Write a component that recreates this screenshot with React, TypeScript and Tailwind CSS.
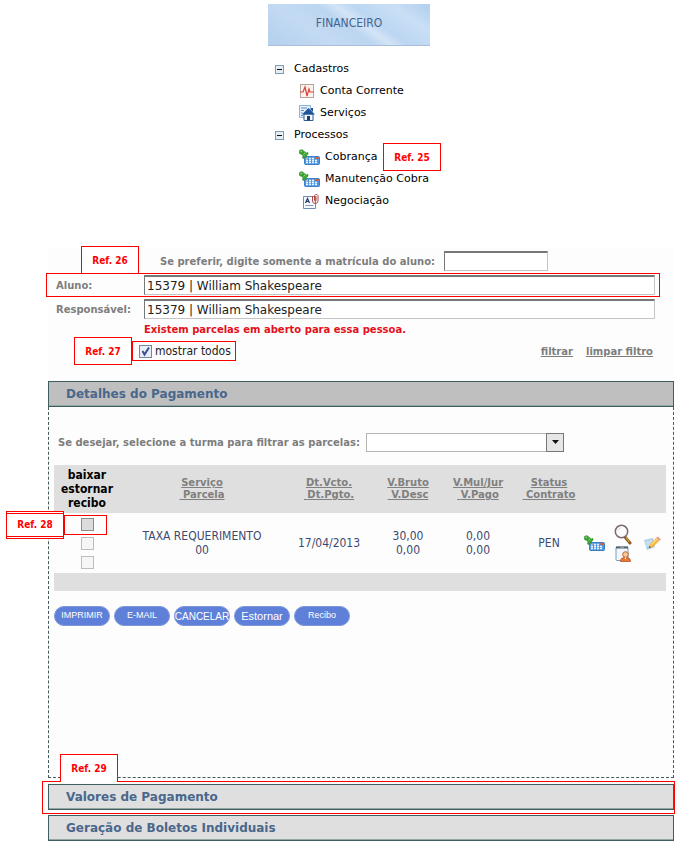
import type { ReactNode } from 'react'

const COLUMNS = [
  { top: 'Serviço', bottom: 'Parcela' },
  { top: 'Dt.Vcto.', bottom: 'Dt.Pgto.' },
  { top: 'V.Bruto', bottom: 'V.Desc' },
  { top: 'V.Mul/Jur', bottom: 'V.Pago' },
  { top: 'Status', bottom: 'Contrato' },
]

const ACTIONS = [
  { label: 'IMPRIMIR', size: 'text-[9px]' },
  { label: 'E-MAIL', size: 'text-[9px]' },
  { label: 'CANCELAR', size: 'text-[10px]' },
  { label: 'Estornar', size: 'text-[11px]' },
  { label: 'Recibo', size: 'text-[9px]' },
]

function MinusIcon() {
  return (
    <svg width="9" height="9" viewBox="0 0 9 9">
      <rect x=".5" y=".5" width="8" height="8" fill="#e6eef5" stroke="#7f9db5" />
      <path d="M2 4.5h5" stroke="#111" />
    </svg>
  )
}

function PulseIcon() {
  return (
    <svg width="14" height="14" viewBox="0 0 14 14">
      <rect x=".5" y=".5" width="13" height="13" fill="#fbf3ef" stroke="#b9a49c" />
      <path d="M0 8h3l2-5 2 9 2-7 1 3h4" fill="none" stroke="#dd4238" strokeWidth="1.2" />
    </svg>
  )
}

function HouseIcon() {
  return (
    <svg width="16" height="16" viewBox="0 0 16 16">
      <path d="M.5 .5h11v12H.5z" fill="#e4eff9" stroke="#8fb2d6" />
      <path d="M2 3h6M2 5.500h3M2 8h2M2 10.500h2" stroke="#5c93cf" />
      <path d="M5 15.500V9h9v6.500z" fill="#f4f8fc" stroke="#315f96" />
      <path d="M3 9.500 9.500 3l6.500 6.500z" fill="#1f5599" />
      <path d="M12 3h2v4l-2-2z" fill="#1f5599" />
      <path d="M8 11h3v4.500H8z" fill="#193c6b" />
    </svg>
  )
}

function PinKeyboardIcon() {
  return (
    <svg width="21" height="17" viewBox="0 0 21 17">
      <rect x="5.500" y="7.500" width="15" height="8" rx="1" fill="#4f97e0" stroke="#3b7fc6" />
      <path d="M7 9.500h8M7 11.500h12M7 13.500h12" stroke="#eaf5ff" strokeWidth="1.300" strokeDasharray="2 1" />
      <path d="M16.500 9h3" stroke="#e8572c" strokeWidth="2" />
      <path d="m5.500 7 3.500 3.500" stroke="#707070" />
      <circle cx="2.500" cy="3" r="2.300" fill="#3faa35" stroke="#23801f" strokeWidth=".6" />
      <path d="m3 5 2.500-2.500 2 1.500 1.500-.5L9 5 5 9.500l-1.500-.5.500-2z" fill="#3faa35" stroke="#23801f" strokeWidth=".6" />
      <path d="m1.500 2.500 1.500-.5M4.500 5l1.500-1" stroke="#9be27f" />
    </svg>
  )
}

function ContractIcon() {
  return (
    <svg width="17" height="17" viewBox="0 0 17 17">
      <path d="M.5 3.500h12v12H.5z" fill="#f6f9fd" stroke="#6f8db4" />
      <path d="M2.500 10 4.500 5.500 6.500 10M3.500 8.500h2" fill="none" stroke="#1f3d70" strokeWidth="1.200" />
      <path d="M2.500 12.500h8" stroke="#7f9bc0" />
      <path d="M9.500 3v5a2.500 2.500 0 0 0 5.500-.5V2.500a2 2 0 0 0-3.500 0V7.500a.8.8 0 0 0 1.500 0V3" fill="none" stroke="#b04848" />
    </svg>
  )
}

function MagnifierIcon() {
  return (
    <svg width="18" height="21" viewBox="0 0 18 21">
      <path d="m11 13 5 6" stroke="#8a5a24" strokeWidth="3" strokeLinecap="round" />
      <path d="m12 13.500 3.500 4.500" stroke="#e0a23c" strokeWidth="1.200" />
      <circle cx="7.500" cy="7.500" r="6.200" fill="#fcfcfc" stroke="#7b6b68" strokeWidth="1.500" />
      <path d="M4 7a4 4 0 0 1 3-3" fill="none" stroke="#dcdcdc" />
    </svg>
  )
}

function ClipboardUserIcon() {
  return (
    <svg width="16" height="17" viewBox="0 0 16 17">
      <rect x="1" y="2" width="12" height="13.500" rx="1" fill="#f1f7fc" stroke="#7b9dbd" />
      <path d="M1 2.500h12" stroke="#53616e" strokeWidth="2" />
      <path d="M5 1h4v2H5z" fill="#8f989f" />
      <path d="M5.500 16.500c0-3 1.500-4 5-4s5 1 5 4z" fill="#e9752e" stroke="#a9471c" strokeWidth=".7" />
      <circle cx="10.500" cy="9.500" r="2.800" fill="#f8c89a" stroke="#c0622b" />
      <path d="m9.500 12.500 1 2 1-2z" fill="#fff" />
    </svg>
  )
}

function PencilIcon() {
  return (
    <svg width="17" height="15" viewBox="0 0 17 15">
      <path d="m0 4 9-2 2 9-8 3z" fill="#a9cbea" />
      <path d="m1 5 7-1.500 1 4-6 4z" fill="#c6ddf2" />
      <path d="m5 12 1-4 6-6 3 3-6 6z" fill="#f3b63a" />
      <path d="m7 9 6-6" stroke="#fbdc82" strokeWidth="1.200" />
      <path d="m12 2 2-1.500 3 3-2 1.500z" fill="#e9a08c" />
      <path d="m5 12 .5-2 1.500 1.500z" fill="#444" />
    </svg>
  )
}

function Tag({ children, className = '' }: { children: ReactNode; className?: string }) {
  return (
    <span
      className={`absolute z-10 flex h-7 w-[58px] items-center justify-center border border-[#f00] bg-white font-['DejaVu_Sans_Condensed','DejaVu_Sans',sans-serif] text-[10px] font-bold whitespace-nowrap text-[#f00] ${className}`}
    >
      {children}
    </span>
  )
}

function MenuItem({ icon, children }: { icon: ReactNode; children: ReactNode }) {
  return (
    <li className="flex h-[22px] items-center gap-1 pl-[31px] whitespace-nowrap">
      <span className="flex min-w-4 shrink-0 justify-center">{icon}</span>
      <a href="#" className="pl-px">{children}</a>
    </li>
  )
}

function MenuGroup({ title, children }: { title: string; children: ReactNode }) {
  return (
    <li>
      <button type="button" className="flex h-[22px] items-center gap-[10px] pl-[7px]">
        <MinusIcon />
        {title}
      </button>
      <ul>{children}</ul>
    </li>
  )
}

function Menu() {
  return (
    <nav className="relative w-[162px] text-[11px] text-black">
      <h1 className="flex h-[42px] items-center justify-center border-b border-[#a9bfd8] bg-[linear-gradient(35deg,#b4d0ed_0%,#c3daf3_30%,#bcd6f1_48%,#d3e4f6_56%,#bcd6f2_64%,#c9dff5_82%,#b0ceee_100%)] pb-1 font-['DejaVu_Sans_Condensed','DejaVu_Sans',sans-serif] text-xs text-[#44658f]">
        FINANCEIRO
      </h1>
      <ul className="pt-3">
        <MenuGroup title="Cadastros">
          <MenuItem icon={<PulseIcon />}>Conta Corrente</MenuItem>
          <MenuItem icon={<HouseIcon />}>Serviços</MenuItem>
        </MenuGroup>
        <MenuGroup title="Processos">
          <MenuItem icon={<PinKeyboardIcon />}>Cobrança</MenuItem>
          <MenuItem icon={<PinKeyboardIcon />}>Manutenção Cobra</MenuItem>
          <MenuItem icon={<span className="pl-1"><ContractIcon /></span>}>Negociação</MenuItem>
        </MenuGroup>
      </ul>
      <Tag className="top-[139px] left-[115px]">Ref. 25</Tag>
    </nav>
  )
}

const FIELD =
  'h-5 border border-t-2 border-[#c4c4c4] border-t-[#777] border-l-[#777] bg-white text-xs text-[#222] outline-none'

function Filters() {
  return (
    <form className="text-[10px] font-bold text-[#7d7d7d]">
      <div className="flex h-[25px] items-center pt-px pl-28">
        <label htmlFor="matricula" className="w-[284px] whitespace-nowrap">
          Se preferir, digite somente a matrícula do aluno:
        </label>
        <input id="matricula" className={`${FIELD} w-26`} />
      </div>
      <div className="relative flex h-6 items-center pr-[19px] pl-2">
        <span className="pointer-events-none absolute inset-y-0 right-[14px] -left-0.5 border border-[#f00]" />
        <Tag className="-top-[27px] left-[33px]">Ref. 26</Tag>
        <label htmlFor="aluno" className="w-22 shrink-0">Aluno:</label>
        <input id="aluno" defaultValue="15379 | William Shakespeare" className={`${FIELD} min-w-0 grow pl-0.5 font-normal`} />
      </div>
      <div className="flex h-6 items-center pr-[19px] pl-2">
        <label htmlFor="responsavel" className="w-22 shrink-0">Responsável:</label>
        <input id="responsavel" defaultValue="15379 | William Shakespeare" className={`${FIELD} min-w-0 grow pl-0.5 font-normal`} />
      </div>
      <p className="h-5 pl-24 leading-[17px] text-[#e3101c]">Existem parcelas em aberto para essa pessoa.</p>
      <div className="relative flex h-5 items-center justify-between pr-[21px] pl-21">
        <Tag className="-top-1 left-[26px]">Ref. 27</Tag>
        <label className="flex h-5 w-[104px] items-center gap-[3px] border border-[#f00] pl-[6px] font-['DejaVu_Sans_Condensed','DejaVu_Sans',sans-serif] text-xs font-normal whitespace-nowrap text-[#222]">
          <span className="relative flex">
            <input
              type="checkbox"
              defaultChecked
              className="peer size-[13px] appearance-none border border-[#7389a3] bg-[#e9eef4]"
            />
            <svg width="13" height="13" viewBox="0 0 13 13" className="pointer-events-none absolute hidden peer-checked:block">
              <path d="m3.500 6 2 3.500L10 2.500" fill="none" stroke="#3a4f94" strokeWidth="2" />
            </svg>
          </span>
          mostrar todos
        </label>
        <div className="flex gap-[13px]">
          <a href="#" className="underline">filtrar</a>
          <a href="#" className="underline">limpar filtro</a>
        </div>
      </div>
    </form>
  )
}

function SectionBar({ title, className = '' }: { title: string; className?: string }) {
  return (
    <h2 className={`border border-[#3f5f5e] ${className}`}>
      <button type="button" className="flex h-6 w-full items-center border-b border-[#93a8a6] pl-[17px] text-xs font-bold text-[#49678c]">
        {title}
      </button>
    </h2>
  )
}

function Installments() {
  return (
    <table className="w-full table-fixed text-center font-['DejaVu_Sans_Condensed','DejaVu_Sans',sans-serif] text-xs leading-[14px] text-[#3d4a70]">
      <colgroup>
        <col className="w-[66px]" />
        <col />
        <col className="w-[90px]" />
        <col className="w-[68px]" />
        <col className="w-[72px]" />
        <col className="w-[70px]" />
        <col className="w-6" />
        <col className="w-[30px]" />
        <col className="w-[28px]" />
      </colgroup>
      <thead>
        <tr className="h-12 bg-[#dfdfdf]">
          <th className="text-black">baixar<br />estornar<br />recibo</th>
          {COLUMNS.map((c) => (
            <th key={c.top} className="font-['DejaVu_Sans',sans-serif] text-[10px] leading-3 whitespace-nowrap text-[#808080]">
              <a href="#" className="underline">
                {c.top}
                <br />
                {'\u00a0'}
                {c.bottom}
              </a>
            </th>
          ))}
          <td colSpan={3} />
        </tr>
      </thead>
      <tbody>
        <tr className="h-[60px]">
          <td className="relative">
            <span className="pointer-events-none absolute top-0.5 right-[13px] left-[10px] h-5 border border-[#f00]" />
            <Tag className="-top-0.5 -left-12">
              <span className="flex h-6 w-full items-center justify-center border-y border-[#f00]">Ref. 28</span>
            </Tag>
            <div className="flex flex-col items-center gap-[6px]">
              {['baixar', 'estornar', 'recibo'].map((name) => (
                <input
                  key={name}
                  type="checkbox"
                  aria-label={name}
                  className="size-[13px] appearance-none border border-[#bdbdbd] bg-[#f6f6f6] first:border-[#8c8c8c] first:bg-[#dcdcdc]"
                />
              ))}
            </div>
          </td>
          <td>TAXA REQUERIMENTO<br />00</td>
          <td>17/04/2013</td>
          <td>30,00<br />0,00</td>
          <td>0,00<br />0,00</td>
          <td>PEN</td>
          <td><button type="button" aria-label="Cobrança" className="block"><PinKeyboardIcon /></button></td>
          <td>
            <button type="button" aria-label="Detalhes" className="mx-auto block"><MagnifierIcon /></button>
            <button type="button" aria-label="Responsável" className="mx-auto block"><ClipboardUserIcon /></button>
          </td>
          <td><button type="button" aria-label="Editar" className="mx-auto block"><PencilIcon /></button></td>
        </tr>
      </tbody>
      <tfoot>
        <tr className="h-[18px] bg-[#dfdfdf]">
          <td colSpan={9} />
        </tr>
      </tfoot>
    </table>
  )
}

export default function App() {
  return (
    <main className="bg-white pt-1 pb-1 font-['DejaVu_Sans',sans-serif]">
      <div className="flex justify-center pl-[21px]">
        <Menu />
      </div>

      <div className="mt-9 mr-[3px] ml-12 bg-[#fdfdfd]">
        <Filters />

        <section className="mt-5">
          <SectionBar title="Detalhes do Pagamento" className="bg-[#bfbfbf]" />
          <div className="h-[371px] border border-t-0 border-dashed border-[#455a5a] pr-[7px] pl-[5px]">
            <div className="flex h-[58px] items-center pt-3 pl-1 text-[10px] font-bold text-[#7d7d7d]">
              <label htmlFor="turma" className="w-[308px] whitespace-nowrap">
                Se desejar, selecione a turma para filtrar as parcelas:
              </label>
              <div className="relative w-[198px]">
                <select id="turma" className="block h-[19px] w-full appearance-none border border-[#b5b5b5] bg-white text-black">
                  <option value=""></option>
                </select>
                <span className="pointer-events-none absolute inset-y-0 right-0 flex w-[18px] items-center justify-center border border-[#777] bg-[#e6e6e6]">
                  <svg width="7" height="4" viewBox="0 0 7 4"><path d="M0 0h7L3.500 4z" fill="#111" /></svg>
                </span>
              </div>
            </div>
            <Installments />
            <div className="flex gap-1 pt-[15px]">
              {ACTIONS.map((a) => (
                <button
                  key={a.label}
                  type="button"
                  className={`flex h-5 w-14 items-center justify-center rounded-full border border-[#7d97dc] bg-[#5f80d8] font-['Liberation_Sans',sans-serif] whitespace-nowrap text-white ${a.size}`}
                >
                  {a.label}
                </button>
              ))}
            </div>
          </div>
        </section>

        <div className="relative mt-[6px]">
          <span className="pointer-events-none absolute -top-[3px] -right-px -bottom-1 -left-[6px] border border-[#f00]" />
          <Tag className="-top-[30px] left-3 border-b-0">Ref. 29</Tag>
          <SectionBar title="Valores de Pagamento" className="bg-[#dfdfdf]" />
        </div>
        <SectionBar title="Geração de Boletos Individuais" className="mt-[5px] bg-[#dfdfdf]" />
      </div>
    </main>
  )
}
